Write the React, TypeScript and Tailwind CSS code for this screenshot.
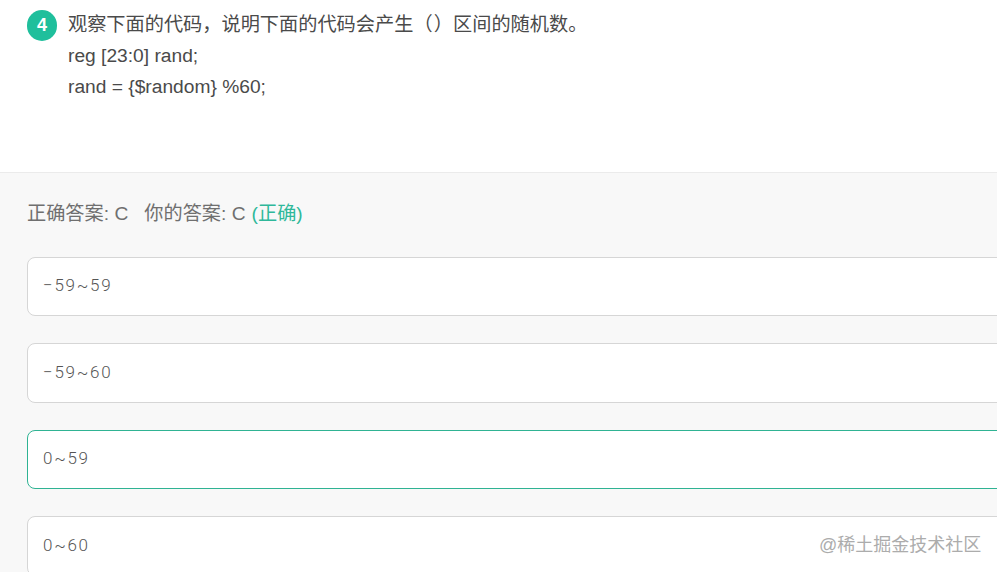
const options = [
  { id: 'a', text: '−59~59', correct: false },
  { id: 'b', text: '−59~60', correct: false },
  { id: 'c', text: '0~59', correct: true },
  { id: 'd', text: '0~60', correct: false },
];

const sans = 'font-["Liberation_Sans","Noto_Sans_CJK_SC",sans-serif]';

export default function App() {
  return (
    <div className={`relative h-[572px] w-[997px] overflow-hidden bg-white ${sans}`}>
      <section className="flex h-[173px] gap-[11px] border-b border-[#ebebeb] pl-[27px] pt-[10px]">
        <div className="flex h-[31px] w-[30px] shrink-0 items-center justify-center rounded-full bg-[#1fbf9c] text-[18px] font-bold text-white">
          4
        </div>
        <div className="-mt-[1px] text-[19.2px] leading-[31px] text-[#4a4a4a] [text-spacing-trim:space-all]">
          <p>
            观察下面的代码，说明下面的代码会产生<span className="mr-[1.3px]">（</span>）区间的随机数。
          </p>
          <p>reg [23:0] rand;</p>
          <p>rand = {'{'}$random{'}'} %60;</p>
        </div>
      </section>

      <section className="h-[399px] bg-[#f8f8f8] pl-[27px]">
        <div className="flex h-[83.7px] items-center text-[19.2px] text-[#6f6f6f]">
          <span>正确答案: C</span>
          <span className="ml-[16px]">你的答案: C</span>
          <span className="ml-[6px] text-[#2fb89a]">(正确)</span>
        </div>
        <div className="flex w-[1100px] flex-col gap-[27px]">
          {options.map(opt => (
            <div
              key={opt.id}
              className={`flex h-[59.5px] items-center rounded-[8px] border bg-white pb-[1px] pl-[15px] font-["Roboto",sans-serif] text-[17px] font-light tracking-[1.7px] text-[#555555] ${
                opt.correct ? 'border-[#2fb393]' : 'border-[#d6d6d6]'
              }`}
            >
              {opt.text}
            </div>
          ))}
        </div>
      </section>

      <div className="absolute left-[819px] top-[533px] text-[18px] leading-[24px] text-[#acacac]">@稀土掘金技术社区</div>
    </div>
  );
}
